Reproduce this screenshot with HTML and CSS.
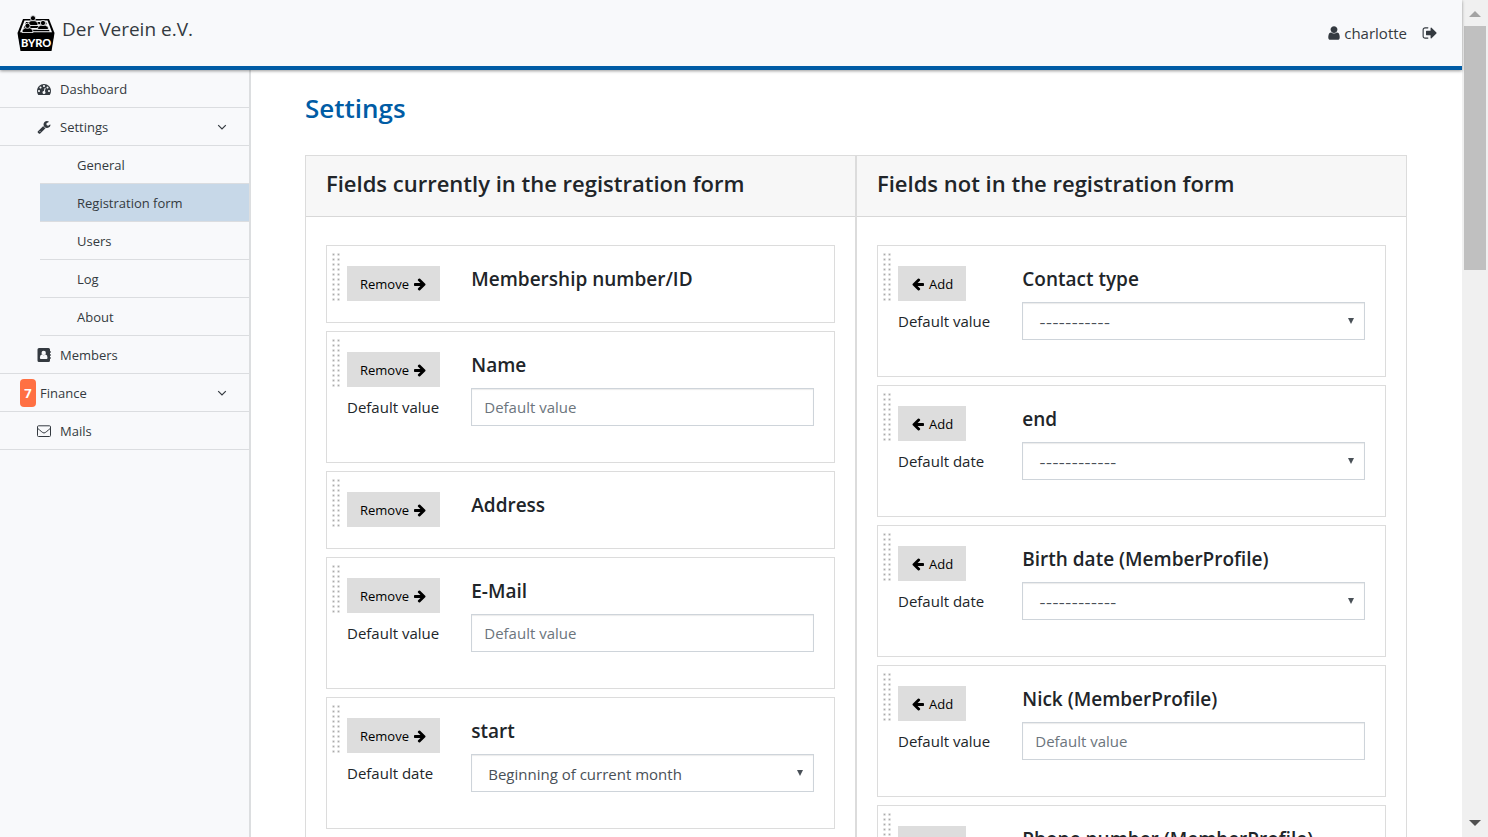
FILE: index.html
```html
<!DOCTYPE html>
<html lang="en">
<head>
<meta charset="utf-8">
<title>Settings – Der Verein e.V.</title>
<link rel="stylesheet" href="styles.css">
</head>
<body>
<svg class="sprite" aria-hidden="true">
  <symbol id="i-user" viewBox="0 0 1792 1792"><path d="M1536 1399q0 109-62.500 187t-150.500 78h-854q-88 0-150.500-78t-62.500-187q0-85 8.500-160.500t31.500-152 58.500-131 94-89 134.500-34.500q131 128 313 128t313-128q76 0 134.500 34.500t94 89 58.500 131 31.500 152 8.500 160.500zm-256-887q0 159-112.500 271.500t-271.500 112.500-271.500-112.500-112.500-271.500 112.500-271.500 271.500-112.500 271.500 112.500 112.500 271.500z"/></symbol>
  <symbol id="i-out" viewBox="0 0 1792 1792"><path d="M704 1440q0 4 1 20t.5 26.500-3 23.500-10 19.500-20.500 6.500h-320q-119 0-203.500-84.500t-84.500-203.500v-704q0-119 84.500-203.500t203.500-84.500h320q13 0 22.500 9.500t9.500 22.500q0 4 1 20t.5 26.500-3 23.500-10 19.500-20.500 6.500h-320q-66 0-113 47t-47 113v704q0 66 47 113t113 47h312l11.500 1 11.500 3 8 5.500 7 9 2 13.500zm928-544q0 26-19 45l-544 544q-19 19-45 19t-45-19-19-45v-288h-448q-26 0-45-19t-19-45v-384q0-26 19-45t45-19h448v-288q0-26 19-45t45-19 45 19l544 544q19 19 19 45z"/></symbol>
  <symbol id="i-right" viewBox="64 0 1664 1792"><path d="M1600 960q0 54-37 91l-651 651q-39 37-91 37-51 0-90-37l-75-75q-38-38-38-91t38-91l293-293h-704q-52 0-84.500-37.500t-32.500-90.500v-128q0-53 32.500-90.500t84.500-37.500h704l-293-294q-38-36-38-90t38-90l75-75q38-38 90-38 53 0 91 38l651 651q37 35 37 90z"/></symbol>
  <symbol id="i-left" viewBox="64 0 1664 1792"><path transform="matrix(-1 0 0 1 1792 0)" d="M1600 960q0 54-37 91l-651 651q-39 37-91 37-51 0-90-37l-75-75q-38-38-38-91t38-91l293-293h-704q-52 0-84.500-37.500t-32.500-90.500v-128q0-53 32.500-90.500t84.500-37.500h704l-293-294q-38-36-38-90t38-90l75-75q38-38 90-38 53 0 91 38l651 651q37 35 37 90z"/></symbol>
  <symbol id="i-dash" viewBox="0 0 1792 1792"><path d="M384 1152q0-53-37.500-90.500t-90.500-37.500-90.500 37.500-37.500 90.500 37.500 90.500 90.500 37.500 90.500-37.500 37.500-90.500zm192-448q0-53-37.500-90.500t-90.500-37.500-90.500 37.500-37.500 90.500 37.500 90.500 90.500 37.500 90.500-37.500 37.500-90.500zm428 481l101-382q6-26-7.500-48.500t-38.500-29.500-48 6.500-30 39.500l-101 382q-60 5-107 43.500t-63 98.500q-20 77 20 146t117 89 146-20 89-117q16-60-6-117t-72-91zm660-33q0-53-37.500-90.500t-90.500-37.500-90.500 37.500-37.500 90.500 37.500 90.500 90.500 37.500 90.500-37.500 37.500-90.500zm-640-640q0-53-37.500-90.500t-90.500-37.500-90.500 37.500-37.500 90.500 37.500 90.500 90.500 37.500 90.500-37.500 37.500-90.500zm448 192q0-53-37.500-90.500t-90.500-37.500-90.500 37.500-37.500 90.500 37.500 90.500 90.500 37.500 90.500-37.500 37.500-90.500zm320 448q0 261-141 483-19 29-54 29h-1402q-35 0-54-29-141-221-141-483 0-182 71-348t191-286 286-191 348-71 348 71 286 191 191 286 71 348z"/></symbol>
  <symbol id="i-wrench" viewBox="0 0 1792 1792"><path d="M448 1472q0-26-19-45t-45-19-45 19-19 45 19 45 45 19 45-19 19-45zm644-420l-682 682q-37 37-90 37-52 0-91-37l-106-108q-38-36-38-90 0-53 38-91l681-681q39 98 114.500 173.500t173.500 114.500zm634-435q0 39-23 106-47 134-164.500 217.500t-258.500 83.500q-185 0-316.500-131.500t-131.500-316.500 131.500-316.500 316.500-131.500q58 0 121.500 16.500t107.500 46.500q16 11 16 28t-16 28l-293 169v224l193 107q5-3 79-48.500t135.500-81 70.500-35.500q15 0 23.500 10t8.500 25z"/></symbol>
  <symbol id="i-book" viewBox="0 0 14 14"><path d="M2 0h9.500a1.500 1.500 0 0 1 1.500 1.500V3h.6v2H13v1h.6v2H13v1h.6v2H13v1.500a1.500 1.500 0 0 1-1.500 1.500H2A1.500 1.500 0 0 1 .5 12.500v-11A1.500 1.500 0 0 1 2 0z"/><g fill="#f8f9fb"><circle cx="6.700" cy="4.900" r="2.200"/><path d="M4.700 6.600q2 1.500 4 0 1.800.6 1.800 3.200 0 1.200-1 1.200H3.900q-1 0-1-1.200 0-2.600 1.800-3.200z"/></g></symbol>
  <symbol id="i-mail" viewBox="0 0 14 14"><path fill="none" stroke="currentColor" d="M1.500 1.800h11a1 1 0 0 1 1 1v8.700a1 1 0 0 1-1 1h-11a1 1 0 0 1-1-1V2.800a1 1 0 0 1 1-1zM.8 4.500C3 6.200 5.600 9 7 9s4-2.800 6.200-4.500"/></symbol>
  <symbol id="i-down" viewBox="0 0 14 14"><path fill="none" stroke="currentColor" stroke-width="1.200" d="M3.200 5.200 7 9l3.800-3.800"/></symbol>
</svg>

<div class="page">
  <header class="topbar">
    <a class="brand" href="#">
      <svg class="logo" viewBox="0 0 38 36" aria-hidden="true">
        <path d="M6 4h26l5.500 14-3 18h-31L.5 18z"/>
        <path d="M7.500 5.500h23L35 17.300H3z" fill="#f8f9fb"/>
        <path d="M9 7h20l.8 2.200H8.200zM7.500 11h23l.8 2H6.700zM6 14.800h26l.6 1.500H5.400z"/>
        <g stroke="#f8f9fb" stroke-width=".8">
          <path d="M11 10.500q0-5 5-5t5 5z"/><circle cx="16" cy="3.200" r="2.600"/>
          <path d="M20.500 14.500q0-4.500 5.500-4.500t5.500 4.500z"/><circle cx="26" cy="8" r="2.600"/>
          <path d="M5 17.500q0-5 5.500-5t5.500 5z"/><circle cx="10.500" cy="10.800" r="2.600"/>
        </g>
        <path d="M1 18.500h36l-3 17H4z"/>
        <text class="logo-text" x="19" y="32" text-anchor="middle">BYRO</text>
      </svg>
      <span>Der Verein e.V.</span>
    </a>
    <nav class="account" aria-label="Account">
      <a href="#"><svg class="icon"><use href="#i-user"/></svg> charlotte</a>
      <a href="#" aria-label="Log out"><svg class="icon"><use href="#i-out"/></svg></a>
    </nav>
  </header>

  <div class="shell">
    <nav class="sidebar" aria-label="Main">
      <a class="nav" href="#"><svg class="icon"><use href="#i-dash"/></svg>Dashboard</a>
      <a class="nav" href="#"><svg class="icon"><use href="#i-wrench"/></svg>Settings<svg class="icon caret"><use href="#i-down"/></svg></a>
      <div class="subnav">
        <a class="nav" href="#">General</a>
        <a class="nav active" href="#">Registration form</a>
        <a class="nav" href="#">Users</a>
        <a class="nav" href="#">Log</a>
        <a class="nav" href="#">About</a>
      </div>
      <a class="nav" href="#"><svg class="icon"><use href="#i-book"/></svg>Members</a>
      <a class="nav badged" href="#"><span class="badge">7</span>Finance<svg class="icon caret"><use href="#i-down"/></svg></a>
      <a class="nav" href="#"><svg class="icon"><use href="#i-mail"/></svg>Mails</a>
    </nav>

    <main class="content">
      <h1>Settings</h1>
      <div class="cards">
        <section class="card">
          <h2>Fields currently in the registration form</h2>
          <div class="list">
            <article class="field"><i class="grip"></i><div class="grid">
              <div><button type="button">Remove <svg class="icon"><use href="#i-right"/></svg></button></div>
              <h3>Membership number/ID</h3>
            </div></article>
            <article class="field"><i class="grip"></i><div class="grid">
              <div><button type="button">Remove <svg class="icon"><use href="#i-right"/></svg></button></div>
              <h3>Name</h3>
              <label for="f-name">Default value</label>
              <div class="control"><input id="f-name" type="text" placeholder="Default value"></div>
            </div></article>
            <article class="field"><i class="grip"></i><div class="grid">
              <div><button type="button">Remove <svg class="icon"><use href="#i-right"/></svg></button></div>
              <h3>Address</h3>
            </div></article>
            <article class="field"><i class="grip"></i><div class="grid">
              <div><button type="button">Remove <svg class="icon"><use href="#i-right"/></svg></button></div>
              <h3>E-Mail</h3>
              <label for="f-mail">Default value</label>
              <div class="control"><input id="f-mail" type="text" placeholder="Default value"></div>
            </div></article>
            <article class="field"><i class="grip"></i><div class="grid">
              <div><button type="button">Remove <svg class="icon"><use href="#i-right"/></svg></button></div>
              <h3>start</h3>
              <label for="f-start">Default date</label>
              <div class="control drop"><select id="f-start"><option>Beginning of current month</option></select></div>
            </div></article>
          </div>
        </section>

        <section class="card">
          <h2>Fields not in the registration form</h2>
          <div class="list">
            <article class="field"><i class="grip"></i><div class="grid">
              <div><button type="button"><svg class="icon"><use href="#i-left"/></svg> Add</button></div>
              <h3>Contact type</h3>
              <label for="f-type">Default value</label>
              <div class="control drop"><select id="f-type" class="blank"><option>-----------</option></select></div>
            </div></article>
            <article class="field"><i class="grip"></i><div class="grid">
              <div><button type="button"><svg class="icon"><use href="#i-left"/></svg> Add</button></div>
              <h3>end</h3>
              <label for="f-end">Default date</label>
              <div class="control drop"><select id="f-end" class="blank"><option>------------</option></select></div>
            </div></article>
            <article class="field"><i class="grip"></i><div class="grid">
              <div><button type="button"><svg class="icon"><use href="#i-left"/></svg> Add</button></div>
              <h3>Birth date (MemberProfile)</h3>
              <label for="f-birth">Default date</label>
              <div class="control drop"><select id="f-birth" class="blank"><option>------------</option></select></div>
            </div></article>
            <article class="field"><i class="grip"></i><div class="grid">
              <div><button type="button"><svg class="icon"><use href="#i-left"/></svg> Add</button></div>
              <h3>Nick (MemberProfile)</h3>
              <label for="f-nick">Default value</label>
              <div class="control"><input id="f-nick" type="text" placeholder="Default value"></div>
            </div></article>
            <article class="field"><i class="grip"></i><div class="grid">
              <div><button type="button"><svg class="icon"><use href="#i-left"/></svg> Add</button></div>
              <h3>Phone number (MemberProfile)</h3>
              <label for="f-phone">Default value</label>
              <div class="control"><input id="f-phone" type="text" placeholder="Default value"></div>
            </div></article>
          </div>
        </section>
      </div>
    </main>
  </div>
</div>
<div class="scrollbar" aria-hidden="true"><i class="up"></i><i class="thumb"></i><i class="down"></i></div>
</body>
</html>
```
FILE: styles.css
```css
* { box-sizing: border-box; }

body {
  margin: 0;
  height: 100vh;
  display: flex;
  overflow: hidden;
  background: #fff;
  color: #212529;
  font: 15px/24px "Open Sans", "Noto Sans", sans-serif;
}

a { color: #343a40; text-decoration: none; }
h1, h2, h3 { margin: 0; font-weight: 600; }

.sprite { display: none; }
.icon { width: 14px; height: 14px; fill: currentColor; flex: none; }

.page {
  flex: 1;
  min-width: 0;
  display: flex;
  flex-direction: column;
}

.topbar {
  flex: none;
  display: flex;
  align-items: flex-start;
  justify-content: space-between;
  height: 70px;
  padding: 15px 24px 0 17px;
  background: #f8f9fb;
  border-bottom: 4px solid #005ca5;
  box-shadow: 0 1px 3px rgba(0, 0, 0, .4);
  z-index: 1;
}
.brand { display: flex; gap: 7px; font-size: 19px; line-height: 28px; }
.logo { width: 38px; height: 36px; overflow: visible; }
.logo-text { font: 900 11px Lato, sans-serif; fill: #fff; }
.account { display: flex; gap: 15px; padding-top: 6px; }
.account a { display: flex; align-items: center; gap: 2px; }
.account .icon { width: 16px; height: 16px; }

.shell { flex: 1; min-height: 0; display: flex; }

.sidebar {
  flex: none;
  width: 251px;
  background: #f8f9fb;
  border-right: 2px solid #dcdee0;
  font-size: 13px;
}
.nav {
  display: flex;
  align-items: center;
  gap: 9px;
  height: 38px;
  padding: 0 20px 0 37px;
  border-bottom: 1px solid #dbdde0;
}
.nav .caret { margin-left: auto; }
.subnav { margin-left: 40px; }
.active { background: #c7d8e8; }
.badged { gap: 4px; padding-left: 20px; }
.badge {
  width: 16px;
  padding: 2px 0;
  border-radius: 4px;
  background: #ff7043;
  color: #fff;
  font-weight: 700;
  text-align: center;
}

.content { flex: 1; min-width: 0; padding: 22px 55px 0 54px; overflow: hidden; }
h1 { font-size: 26px; line-height: 32px; color: #005ca5; }
.cards { display: grid; grid-template-columns: 1fr 1fr; margin-top: 31px; }
.card { border: 1px solid #dcdcdc; }
.card h2 {
  padding: 12px 20px 18px;
  background: #f7f7f7;
  border-bottom: 1px solid #d8d8d8;
  font-size: 22px;
  line-height: 30px;
}
.list { display: grid; gap: 8px; padding: 28px 20px; }

.field { display: flex; gap: 6px; padding: 0 20px 0 4px; border: 1px solid #dcdcdc; }
.grip {
  flex: none;
  width: 10px;
  height: 50px;
  margin-top: 6px;
  background: radial-gradient(circle, #aaa 0, #ddd 1px, transparent 2px) 0 0 / 5px 5px;
}
.grid {
  flex: 1;
  display: grid;
  grid-template-columns: repeat(4, minmax(0, 1fr));
  column-gap: 30px;
  padding: 20px 0;
}
.grid > * { white-space: nowrap; }
.grid > div:first-child { height: 36px; }
.grid h3, .control { grid-column: span 3; }
h3 { font-size: 19px; line-height: 26px; }
label { line-height: 38px; }

button {
  display: flex;
  align-items: center;
  gap: 4px;
  height: 35px;
  padding: 0 13px;
  border: 0;
  background: #ddd;
  color: #000;
  font: 13px/20px "Open Sans", "Noto Sans", sans-serif;
}

.control { margin-bottom: 16px; }
input, select {
  display: block;
  width: 100%;
  height: 38px;
  padding: 0 12px;
  border: 1px solid #ced4da;
  border-radius: 0;
  background: #fff;
  box-shadow: inset 0 1px 1px rgba(0, 0, 0, .08);
  color: #495057;
  font: inherit;
}
input::placeholder { color: #6c757d; opacity: 1; }
select { appearance: none; padding: 2px 16px 0; }
.blank { padding-top: 4px; font: 14px/24px Inter, sans-serif; }
.drop { position: relative; }
.drop::after {
  content: "";
  position: absolute;
  top: 16px;
  right: 11px;
  width: 6px;
  height: 6px;
  background: #495057;
  clip-path: polygon(0 0, 100% 0, 50% 100%);
}

.scrollbar {
  flex: none;
  width: 26px;
  display: flex;
  flex-direction: column;
  align-items: center;
  background: #f0f0f0;
}
.up, .down { width: 12px; height: 6px; background: #a3a3a3; }
.up { margin: 11px 0 9px; clip-path: polygon(50% 0, 100% 100%, 0 100%); }
.down { margin: auto 0 11px; background: #505050; clip-path: polygon(0 0, 100% 0, 50% 100%); }
.thumb { width: 22px; height: 244px; background: #c0c0c0; }
```
